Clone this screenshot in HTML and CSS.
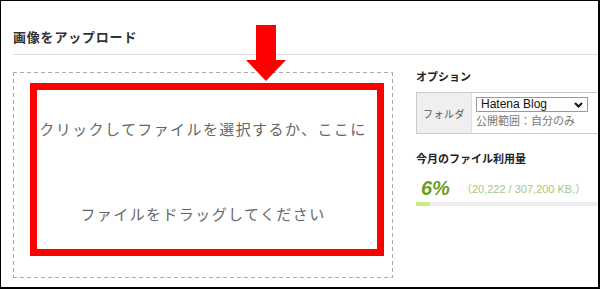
FILE: index.html
```html
<!DOCTYPE html>
<html lang="ja">
<head>
<meta charset="utf-8">
<link rel="stylesheet" href="styles.css">
</head>
<body>
<div class="frame">
  <div class="header"><h1 class="title">画像をアップロード</h1></div>
  <div class="main">
    <div class="dropzone">
      <p class="drop-line">クリックしてファイルを選択するか、ここに</p>
      <p class="drop-line second">ファイルをドラッグしてください</p>
    </div>
    <div class="side">
      <h2 class="side-heading">オプション</h2>
      <div class="opt-table">
        <div class="opt-label">フォルダ</div>
        <div class="opt-value">
          <div class="select">
            <span class="select-text">Hatena Blog</span>
            <svg class="chev" width="9" height="6" viewBox="0 0 9 6"><polyline points="1,1 4.5,4.5 8,1" fill="none" stroke="#111" stroke-width="2"/></svg>
          </div>
          <div class="scope">公開範囲：自分のみ</div>
        </div>
      </div>
      <h2 class="side-heading usage-heading">今月のファイル利用量</h2>
      <div class="usage">
        <span class="pct">6%</span>
        <span class="kb">（20,222 / 307,200 KB.）</span>
      </div>
      <div class="bar"><div class="bar-fill" style="width:14px"></div></div>
    </div>
  </div>
  <div class="mark-box"></div>
  <svg class="mark-arrow" width="40" height="56" viewBox="0 0 40 56">
    <polygon points="10,0 30,0 30,35 40,35 20,56 0,35 10,35" fill="#ff0000"/>
  </svg>
</div>
</body>
</html>
```
FILE: styles.css
```css
html, body {
  margin: 0;
  padding: 0;
  background: #fff;
}
.frame {
  position: relative;
  width: 600px;
  height: 289px;
  box-sizing: border-box;
  border-top: 1px solid #000;
  border-left: 1px solid #000;
  border-right: 2px solid #000;
  border-bottom: 2px solid #000;
  padding-left: 12px;
  overflow: hidden;
  font-family: "Liberation Sans", "Noto Sans CJK JP", sans-serif;
  color: #333;
}
.header {
  padding-top: 29px;
  padding-bottom: 8px;
  border-bottom: 1px solid #ddd;
}
.title {
  margin: 0;
  font-size: 13px;
  line-height: 16px;
  font-weight: bold;
  letter-spacing: 0.8px;
  color: #333;
}
.main {
  display: flex;
  align-items: flex-start;
  margin-top: 17px;
}
.dropzone {
  width: 380px;
  height: 206px;
  box-sizing: border-box;
  padding-top: 48px;
  text-align: center;
  flex-shrink: 0;
  background-image:
    repeating-linear-gradient(90deg, #aaa 0 4px, transparent 4px 7px),
    repeating-linear-gradient(90deg, #aaa 0 4px, transparent 4px 7px),
    repeating-linear-gradient(180deg, #aaa 0 4px, transparent 4px 7px),
    repeating-linear-gradient(180deg, #aaa 0 4px, transparent 4px 7px);
  background-size: 100% 1px, 100% 1px, 1px 100%, 1px 100%;
  background-position: 0 0, 0 100%, 0 0, 100% 0;
  background-repeat: no-repeat;
}
.drop-line {
  margin: 0;
  font-size: 15px;
  line-height: 20px;
  letter-spacing: 1.4px;
  color: #666;
}
.drop-line.second {
  margin-top: 65px;
}
.side {
  margin-left: 23px;
  width: 200px;
  flex-shrink: 0;
}
.side-heading {
  margin: 0;
  font-size: 11px;
  line-height: 11px;
  font-weight: bold;
  color: #222;
}
.opt-table {
  display: flex;
  margin-top: 9px;
  height: 42px;
  box-sizing: border-box;
  border: 1px solid #ccc;
}
.opt-label {
  width: 54px;
  background: #efefef;
  border-right: 1px solid #ddd;
  display: flex;
  align-items: center;
  justify-content: center;
  font-size: 10px;
  letter-spacing: 0.5px;
  color: #555;
}
.opt-value {
  padding: 4px 0 0 4px;
}
.select {
  width: 112px;
  height: 15px;
  box-sizing: border-box;
  border: 1px solid #999;
  background: #fff;
  display: flex;
  align-items: center;
  justify-content: space-between;
  padding: 0 4px 0 4px;
}
.select-text {
  font-size: 12px;
  line-height: 13px;
  color: #111;
}
.chev {
  display: block;
}
.scope {
  margin-top: 2px;
  font-size: 11px;
  line-height: 14px;
  color: #777;
}
.usage-heading {
  margin-top: 20px;
}
.usage {
  display: flex;
  align-items: center;
  margin-top: 13px;
  height: 20px;
  padding-left: 5px;
}
.pct {
  font-size: 20px;
  line-height: 20px;
  font-weight: bold;
  font-style: italic;
  color: #6a9e22;
}
.kb {
  margin-left: 11px;
  font-size: 11px;
  color: #a6c77a;
}
.bar {
  margin-top: 4px;
  height: 4px;
  background: #eee;
}
.bar-fill {
  height: 4px;
  background: #c6ec86;
}
.mark-box {
  position: absolute;
  left: 29px;
  top: 82px;
  width: 354px;
  height: 173px;
  box-sizing: border-box;
  border: 7px solid #ff0000;
}
.mark-arrow {
  position: absolute;
  left: 245px;
  top: 24px;
}
```
